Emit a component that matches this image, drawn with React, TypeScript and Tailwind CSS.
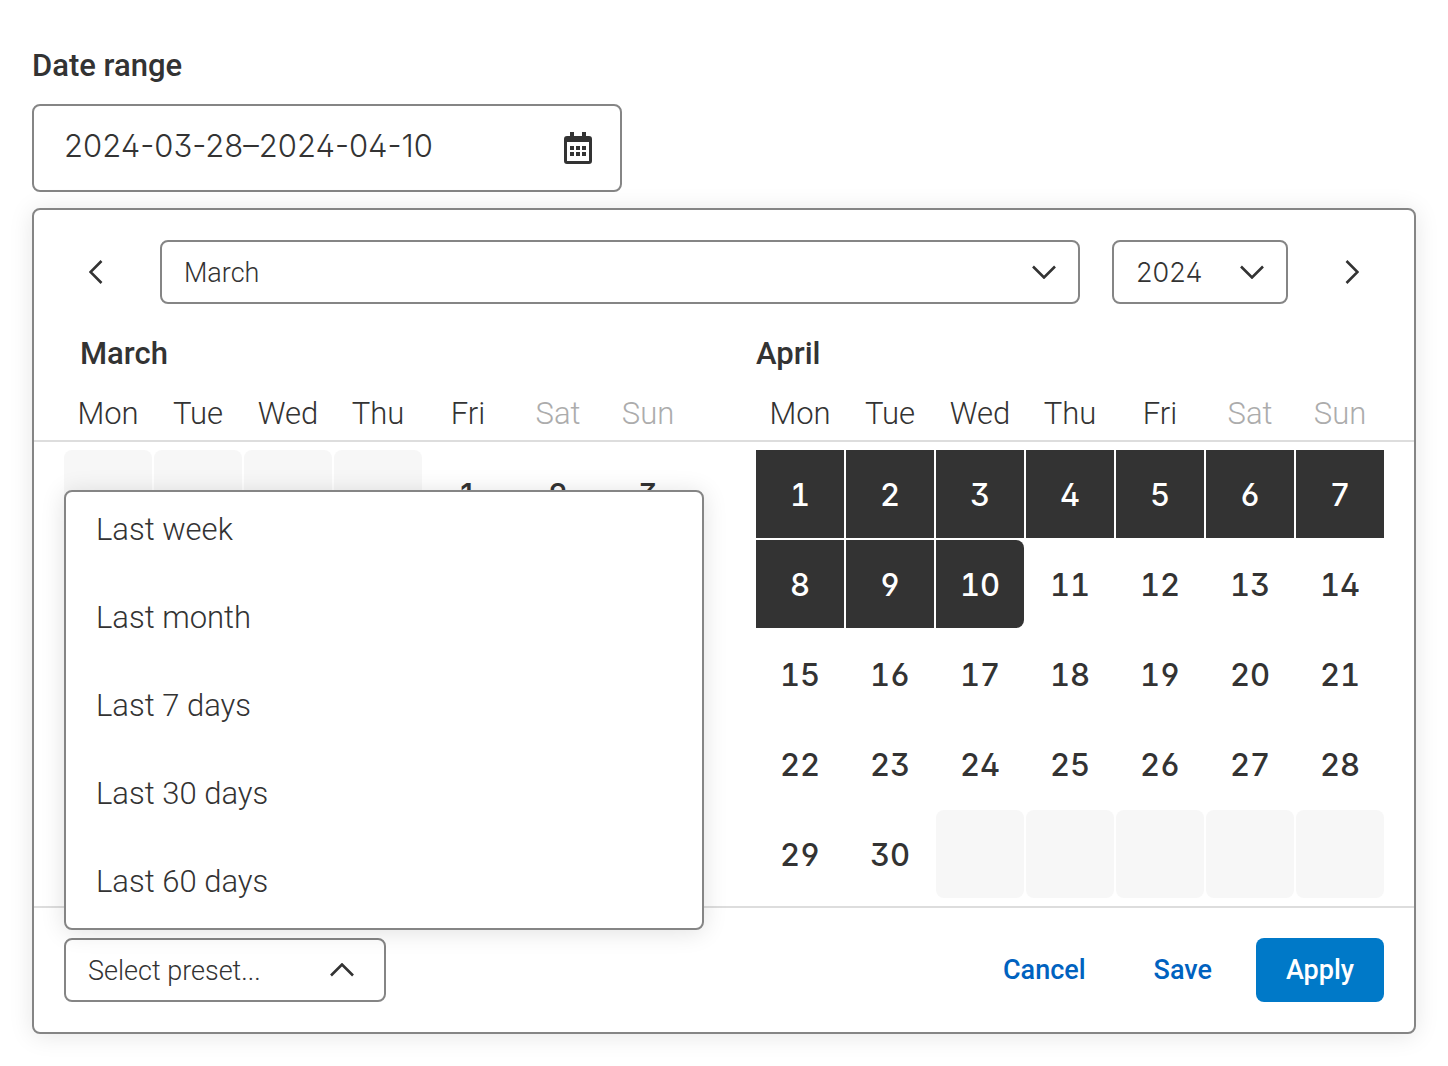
import { useState } from "react";
import clsx from "clsx";

const WEEKDAYS = ["Mon", "Tue", "Wed", "Thu", "Fri", "Sat", "Sun"];
const MONTHS = [
  "January", "February", "March", "April", "May", "June",
  "July", "August", "September", "October", "November", "December",
];
const PRESETS = ["Last week", "Last month", "Last 7 days", "Last 30 days", "Last 60 days"];

// Inter with open 4/6/9 and a flat-topped 3; the day grid adds tabular figures
const DIGITS = "font-[Inter] [font-feature-settings:'ss01','cv09']";
const DAY_DIGITS = "font-[Inter] [font-feature-settings:'tnum','ss01','cv09']";

const POINTS = {
  down: "1,1.5 12,12.5 23,1.5",
  up: "1,12.5 12,1.5 23,12.5",
  left: "12.5,1 1.5,12 12.5,23",
  right: "1.5,1 12.5,12 1.5,23",
};

function Chevron({ direction }: { direction: keyof typeof POINTS }) {
  const flat = direction === "down" || direction === "up";
  return (
    <svg
      aria-hidden="true"
      width={flat ? 24 : 14}
      height={flat ? 14 : 24}
      fill="none"
      stroke="#333"
      strokeWidth="2.6"
      className="pointer-events-none shrink-0"
    >
      <polyline points={POINTS[direction]} />
    </svg>
  );
}

function CalendarIcon() {
  return (
    <svg aria-hidden="true" width="28" height="32" fill="#333">
      <path
        fillRule="evenodd"
        d="M6 0h4v4h8V0h4v4h3a3 3 0 0 1 3 3v22a3 3 0 0 1-3 3H3a3 3 0 0 1-3-3V7a3 3 0 0 1 3-3h3zM3 10v19h22V10z"
      />
      <path d="M6 14h4v4H6zM12 14h4v4h-4zM18 14h4v4h-4zM6 20h4v4H6zM12 20h4v4h-4zM18 20h4v4h-4z" />
    </svg>
  );
}

type MonthProps = {
  name: string;
  offset: number;
  days: number;
  from: number;
  to: number;
  roundStart?: boolean;
  roundEnd?: boolean;
  className: string;
  titleClass?: string;
};

function Month({ name, offset, days, from, to, roundStart, roundEnd, className, titleClass }: MonthProps) {
  const weeks = Array.from({ length: Math.ceil((offset + days) / 7) }, (_, w) =>
    Array.from({ length: 7 }, (_, d) => {
      const day = w * 7 + d - offset + 1;
      return day >= 1 && day <= days ? day : null;
    }),
  );
  return (
    <section aria-label={name}>
      <h2 className={clsx("text-[31px] leading-10 font-medium", className, titleClass)}>{name}</h2>
      <table className="mt-5 block">
        <thead className={clsx("block border-b-2 border-[#ddd] pb-1.5", className)}>
          <tr className="grid grid-cols-7 gap-0.5">
            {WEEKDAYS.map((day, i) => (
              <th
                key={day}
                scope="col"
                className={clsx("text-center text-[31px] leading-10 font-light", i > 4 && "text-[#acacac]")}
              >
                {day}
              </th>
            ))}
          </tr>
        </thead>
        <tbody className={clsx("flex flex-col gap-0.5 py-2", className)}>
          {weeks.map((week, w) => (
            <tr key={w} className="grid grid-cols-7 gap-0.5">
              {week.map((day, d) => {
                if (day === null) return <td key={d} className="h-22 rounded-lg bg-[#f7f7f7]" />;
                const selected = day >= from && day <= to;
                return (
                  <td key={d} className="p-0">
                    <button
                      type="button"
                      aria-pressed={selected}
                      className={clsx(
                        "h-22 w-full pt-0.5 text-[31px] leading-10 font-medium",
                        DAY_DIGITS,
                        selected && "bg-[#333] text-white",
                        roundStart && day === from && "rounded-l-lg",
                        roundEnd && day === to && "rounded-r-lg",
                      )}
                    >
                      {day}
                    </button>
                  </td>
                );
              })}
            </tr>
          ))}
        </tbody>
      </table>
    </section>
  );
}

export default function App() {
  const [range, setRange] = useState("2024-03-28–2024-04-10");
  const [month, setMonth] = useState("March");
  const [year, setYear] = useState("2024");

  return (
    <main className="min-h-screen bg-white px-8 pt-11 pb-8 font-[Roboto,sans-serif] text-[#333]">
      <label htmlFor="range" className="block text-[31px] leading-11 font-medium">
        Date range
      </label>
      <div className="mt-4 flex h-22 w-[590px] items-center rounded-lg border-2 border-[#858585] pr-7 pl-[30px]">
        <input
          id="range"
          value={range}
          onChange={(e) => setRange(e.target.value)}
          className={clsx("h-full min-w-0 flex-1 pb-1.5 text-[31px] font-light outline-none", DIGITS)}
        />
        <button type="button" aria-label="Open calendar">
          <CalendarIcon />
        </button>
      </div>

      <div
        role="dialog"
        aria-label="Choose date range"
        className="mt-4 rounded-lg border-2 border-[#858585] bg-white shadow-[0_2px_24px_rgba(0,0,0,0.1)]"
      >
        <div className="flex gap-8 px-[30px] pt-[30px]">
          <button type="button" aria-label="Previous month" className="flex size-16 items-center justify-center">
            <Chevron direction="left" />
          </button>
          <div className="relative flex-1">
            <select
              aria-label="Month"
              value={month}
              onChange={(e) => setMonth(e.target.value)}
              className="h-16 w-full appearance-none rounded-lg border-2 border-[#858585] pt-0.5 pr-16 pl-[22px] text-[27px] font-light"
            >
              {MONTHS.map((m) => (
                <option key={m}>{m}</option>
              ))}
            </select>
            <span className="pointer-events-none absolute inset-y-0 right-6 flex items-center">
              <Chevron direction="down" />
            </span>
          </div>
          <div className="relative w-44">
            <select
              aria-label="Year"
              value={year}
              onChange={(e) => setYear(e.target.value)}
              className={clsx(
                "h-16 w-full appearance-none rounded-lg border-2 border-[#858585] pt-0.5 pr-14 pl-[22px] text-[27px] font-light",
                DIGITS,
              )}
            >
              {["2023", "2024", "2025"].map((y) => (
                <option key={y}>{y}</option>
              ))}
            </select>
            <span className="pointer-events-none absolute inset-y-0 right-6 flex items-center">
              <Chevron direction="down" />
            </span>
          </div>
          <button type="button" aria-label="Next month" className="flex size-16 items-center justify-center">
            <Chevron direction="right" />
          </button>
        </div>

        <div className="grid grid-cols-2 pt-[30px]">
          <Month
            name="March"
            offset={4}
            days={31}
            from={28}
            to={31}
            roundStart
            className="pr-8 pl-[30px]"
            titleClass="indent-4"
          />
          <Month name="April" offset={0} days={30} from={1} to={10} roundEnd className="pr-[30px] pl-8" />
        </div>

        <div className="flex items-center justify-between border-t-2 border-[#ddd] p-[30px]">
          <div className="relative">
            <ul
              id="presets"
              role="listbox"
              aria-label="Presets"
              className="absolute bottom-full left-0 mb-2 flex w-160 flex-col gap-3 rounded-lg border-2 border-[#858585] bg-white pb-2 shadow-[0_2px_24px_rgba(0,0,0,0.12)]"
            >
              {PRESETS.map((preset) => (
                <li
                  key={preset}
                  role="option"
                  aria-selected="false"
                  className="h-19 px-[30px] text-[31px] leading-[76px] font-light"
                >
                  {preset}
                </li>
              ))}
            </ul>
            <button
              type="button"
              aria-haspopup="listbox"
              aria-expanded="true"
              aria-controls="presets"
              className="flex h-16 w-[322px] items-center justify-between rounded-lg border-2 border-[#858585] pr-[30px] pl-[22px] text-[27px] font-light"
            >
              <span className="pt-0.5">Select preset...</span>
              <Chevron direction="up" />
            </button>
          </div>
          <div className="flex text-[27px] font-medium text-[#0062bf]">
            <button type="button" className="h-16 px-8">
              Cancel
            </button>
            <button type="button" className="mr-3 ml-1 h-16 px-8">
              Save
            </button>
            <button type="button" className="h-16 w-32 rounded-lg bg-[#0079c8] text-white">
              Apply
            </button>
          </div>
        </div>
      </div>
    </main>
  );
}
